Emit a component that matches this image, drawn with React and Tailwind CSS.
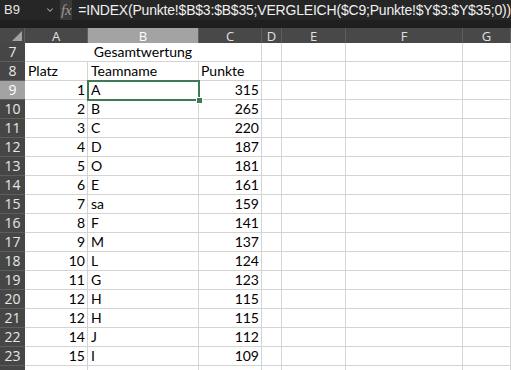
import { ChevronDown } from "lucide-react";

const cols = ["A", "B", "C", "D", "E", "F", "G"];

const rows = [
    [1, "A", 315],
    [2, "B", 265],
    [3, "C", 220],
    [4, "D", 187],
    [5, "O", 181],
    [6, "E", 161],
    [7, "sa", 159],
    [8, "F", 141],
    [9, "M", 137],
    [10, "L", 124],
    [11, "G", 123],
    [12, "H", 115],
    [12, "H", 115],
    [14, "J", 112],
    [15, "I", 109],
];

const gridCols = "grid grid-cols-[25px_63px_111px_63px_20px_64px_117px_1fr]";
const cell = "h-[19px] border-r border-b border-[#d4d4d4] bg-white flex items-end pb-[1px] leading-[16px] whitespace-nowrap";
const rowHead = "h-[19px] border-b border-[#5e5e5e] bg-[#464646] text-[#e6e6e6] flex items-center justify-center text-[14px] leading-[16px] font-['Open_Sans',sans-serif]";

function EmptyCells() {
    return (
        <>
            <div className={cell} />
            <div className={cell} />
            <div className={cell} />
            <div className={cell} />
        </>
    );
}

export default function App() {
    return (
        <div className="w-[511px] h-[370px] overflow-hidden bg-white font-['Lato',sans-serif]">
            {/* Formula bar */}
            <div className="h-[20px] bg-[#262626] flex items-center text-white font-['Liberation_Sans',sans-serif] leading-[16px]">
                <div className="w-[96px] flex items-center justify-between pl-[4px] pr-[5px] text-[13px] text-[#e8e8e8]">
                    <span>B9</span>
                    <ChevronDown className="h-[10px] w-[10px] text-[#b0b0b0]" strokeWidth={2.5} />
                </div>
                <div className="w-[20px] h-[20px] bg-[#3a3a3a] flex items-center justify-center text-[15px] italic text-[#9a9a9a] font-['Liberation_Serif',serif]">
                    fx
                </div>
                <div className="pl-[6px] text-[14px] text-[#f0f0f0] whitespace-nowrap tracking-[-0.2px]">
                    =INDEX(Punkte!$B$3:$B$35;VERGLEICH($C9;Punkte!$Y$3:$Y$35;0))
                </div>
            </div>
            <div className="h-[8px] bg-[#1f1f1f]" />

            {/* Column headers */}
            <div className={`${gridCols} h-[15px] bg-[#484848] text-[#e0e0e0] text-[13px] leading-[14px] font-['Open_Sans',sans-serif]`}>
                <div className="relative h-[15px] border-r border-[#5e5e5e]">
                    <svg className="absolute right-[2px] bottom-[2px]" width="10" height="10" viewBox="0 0 10 10">
                        <path d="M10 0 L10 10 L0 10 Z" fill="#a3a3a3" />
                    </svg>
                </div>
                {cols.map((c) => (
                    <div
                        key={c}
                        className={`h-[15px] flex items-center justify-center border-r border-[#5e5e5e] ${c === "B" ? "bg-[#a3a3a3] text-white" : ""}`}
                    >
                        {c}
                    </div>
                ))}
            </div>

            {/* Body */}
            <div className={`${gridCols} text-[14px] text-black`}>
                {/* Row 7 */}
                <div className={rowHead}>7</div>
                <div className={`${cell} col-span-3 justify-center`}>Gesamtwertung</div>
                <EmptyCells />

                {/* Row 8 */}
                <div className={rowHead}>8</div>
                <div className={`${cell} pl-[3px]`}>Platz</div>
                <div className={`${cell} pl-[3px]`}>Teamname</div>
                <div className={`${cell} pl-[2px]`}>Punkte</div>
                <EmptyCells />

                {rows.map(([platz, name, punkte], i) => {
                    const sel = i === 0;
                    return (
                        <div key={i} className="contents">
                            <div className={`${rowHead} ${sel ? "bg-[#a3a3a3] text-white" : ""}`}>{9 + i}</div>
                            <div className={`${cell} justify-end pr-[2px]`}>{platz}</div>
                            <div className={`${cell} pl-[3px] relative ${sel ? "z-10" : ""}`}>
                                {name}
                                {sel && (
                                    <>
                                        <div className="absolute left-[-1px] top-[-1px] right-[-2px] bottom-[-2px] border-2 border-[#3f7a55]" />
                                        <div className="absolute right-[-5px] bottom-[-5px] w-[7px] h-[7px] bg-[#3f7a55] border border-white" />
                                    </>
                                )}
                            </div>
                            <div className={`${cell} justify-end pr-[2px]`}>{punkte}</div>
                            <EmptyCells />
                        </div>
                    );
                })}

                {/* Row 24 (partial, cut by the window) */}
                <div className={rowHead} />
                <div className={cell} />
                <div className={cell} />
                <div className={cell} />
                <EmptyCells />
            </div>
        </div>
    );
}
